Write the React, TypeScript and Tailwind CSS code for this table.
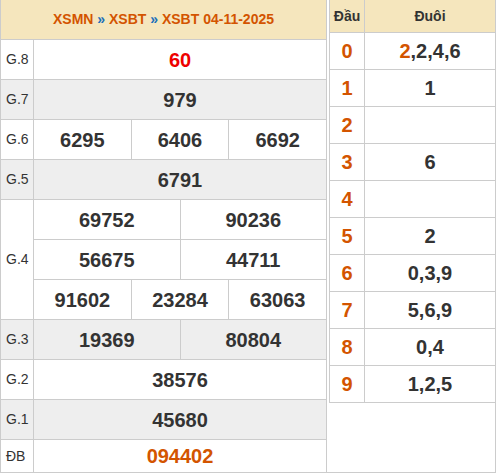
import React from 'react';

type Prize = { label: string; rows: string[][]; grey?: boolean; tone?: 'red' | 'orange' };

const prizes: Prize[] = [
    { label: 'G.8', rows: [['60']], tone: 'red' },
    { label: 'G.7', rows: [['979']], grey: true },
    { label: 'G.6', rows: [['6295', '6406', '6692']] },
    { label: 'G.5', rows: [['6791']], grey: true },
    { label: 'G.4', rows: [['69752', '90236'], ['56675', '44711'], ['91602', '23284', '63063']] },
    { label: 'G.3', rows: [['19369', '80804']], grey: true },
    { label: 'G.2', rows: [['38576']] },
    { label: 'G.1', rows: [['45680']], grey: true },
];

const loto: { head: string; tail: React.ReactNode }[] = [
    { head: '0', tail: <><span className="text-[#d35400]">2</span>,2,4,6</> },
    { head: '1', tail: '1' },
    { head: '2', tail: '' },
    { head: '3', tail: '6' },
    { head: '4', tail: '' },
    { head: '5', tail: '2' },
    { head: '6', tail: '0,3,9' },
    { head: '7', tail: '5,6,9' },
    { head: '8', tail: '0,4' },
    { head: '9', tail: '1,2,5' },
];

const numberTone = (tone?: string) =>
    tone === 'red' ? 'text-[#ee0000]' : tone === 'orange' ? 'text-[#d35400]' : 'text-[#333]';

export default function App() {
    return (
        <div
            className="w-[496px] h-[473px] flex border-b border-r border-[#ccc] bg-white overflow-hidden"
            style={{ fontFamily: '"Liberation Sans", Arial, sans-serif' }}
        >
            {/* results table */}
            <div className="w-[327px] shrink-0 border-l border-r border-[#ccc] flex flex-col">
                <div className="h-[40px] shrink-0 bg-[#f5e6bd] border-b border-[#ccc] flex items-center justify-center text-[14px] font-bold text-[#d35400] whitespace-pre">
                    XSMN <span className="text-[#1a6fba]">»</span> XSBT <span className="text-[#1a6fba]">»</span> XSBT 04-11-2025
                </div>

                {prizes.map((p) => (
                    <div key={p.label} className={`flex shrink-0 border-b border-[#ccc] ${p.grey ? 'bg-[#eeeeee]' : 'bg-white'}`}>
                        <div className="w-[33px] shrink-0 border-r border-[#ccc] flex items-center pl-[5px] text-[14px] text-[#333]">
                            {p.label}
                        </div>
                        <div className="flex-1 flex flex-col">
                            {p.rows.map((row, ri) => (
                                <div
                                    key={ri}
                                    className={ri < p.rows.length - 1 ? 'flex h-[40px] border-b border-[#ccc]' : 'flex h-[39px]'}
                                >
                                    {row.map((n, ci) => (
                                        <div
                                            key={ci}
                                            className={`flex-1 basis-0 flex items-center justify-center text-[20px] font-bold ${numberTone(p.tone)} ${ci > 0 ? 'border-l border-[#ccc]' : ''}`}
                                        >
                                            {n}
                                        </div>
                                    ))}
                                </div>
                            ))}
                        </div>
                    </div>
                ))}

                <div className="flex flex-1 bg-white">
                    <div className="w-[33px] shrink-0 border-r border-[#ccc] flex items-center pl-[5px] text-[14px] text-[#333]">
                        ĐB
                    </div>
                    <div className="flex-1 flex items-center justify-center text-[20px] font-bold text-[#d35400]">
                        094402
                    </div>
                </div>
            </div>

            {/* loto table */}
            <div className="flex-1 pl-[2px]">
                <div className="border-l border-[#ccc]">
                    <div className="flex h-[33px] bg-[#f5e6bd] border-b border-[#ccc] text-[14px] font-bold text-[#333]">
                        <div className="w-[35px] shrink-0 border-r border-[#ccc] flex items-center justify-center">Đầu</div>
                        <div className="flex-1 flex items-center justify-center">Đuôi</div>
                    </div>
                    {loto.map((r) => (
                        <div key={r.head} className="flex h-[37px] border-b border-[#ccc] text-[20px] font-bold">
                            <div className="w-[35px] shrink-0 border-r border-[#ccc] flex items-center justify-center text-[#d35400]">
                                {r.head}
                            </div>
                            <div className="flex-1 flex items-center justify-center text-[#333]">{r.tail}</div>
                        </div>
                    ))}
                </div>
            </div>
        </div>
    );
}
